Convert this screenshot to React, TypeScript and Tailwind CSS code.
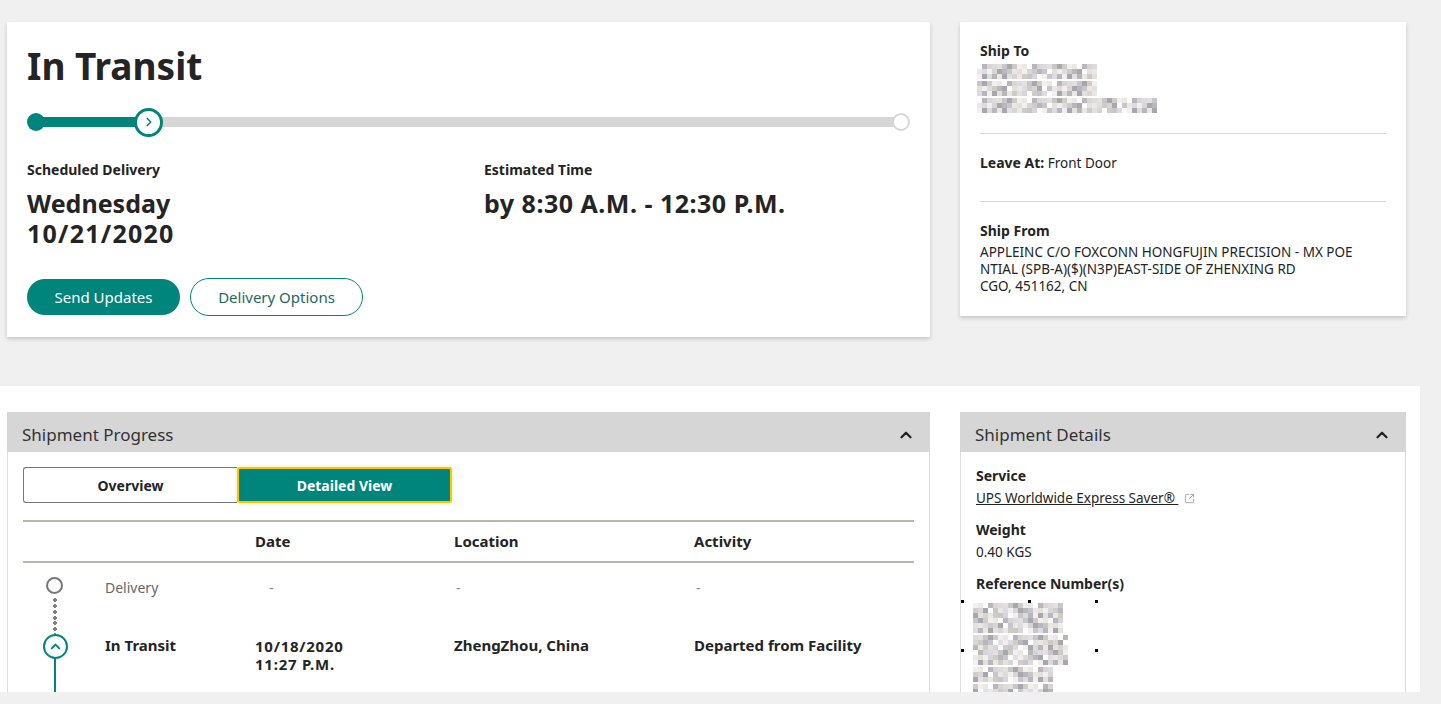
import { ChevronRight, ChevronUp, SquareArrowOutUpRight } from "lucide-react";

const shades = [
  "bg-[#d9d5d6]",
  "bg-[#c8c6cb]",
  "bg-[#f2efee]",
  "bg-[#b9b6bd]",
  "bg-[#e4e0dd]",
  "bg-[#cfcbc6]",
  "bg-white",
  "bg-[#dedbe0]",
  "bg-[#a9a7ae]",
  "bg-[#ebe7e2]",
];

// pixelated (blurred out) text
function Mosaic({ cols, rows, seed }: { cols: number; rows: number; seed: number }) {
  return (
    <div className="flex flex-col">
      {Array.from({ length: rows }).map((_, r) => (
        <div key={r} className="flex">
          {Array.from({ length: cols }).map((_, c) => {
            const i = (c * 7 + r * 13 + seed * 5 + ((c * r + seed) % 3)) % shades.length;
            return <div key={c} className={`h-[5px] w-[5px] ${shades[i]}`} />;
          })}
        </div>
      ))}
    </div>
  );
}

function PanelHeader({ title }: { title: string }) {
  return (
    <div className="flex h-[40px] shrink-0 items-center justify-between bg-[#d6d6d6] pl-[15px] pr-[15px]">
      <span className="translate-y-[3px] text-[17px] text-[#333]">{title}</span>
      <ChevronUp size={18} strokeWidth={3} className="translate-y-[3px] text-[#222]" />
    </div>
  );
}

export default function App() {
  return (
    <div className="min-h-screen bg-[#f0f0f0] font-['Noto_Sans',sans-serif] text-[#242424]">
      {/* Top cards */}
      <div className="flex gap-[30px] px-[7px] pt-[22px]">
        <div className="h-[315px] w-[923px] bg-white px-[20px] pt-[22px] shadow-[0_2px_4px_rgba(0,0,0,0.18)]">
          <h1 className="text-[37px] font-bold leading-[44px]">In Transit</h1>

          {/* progress */}
          <div className="mt-[19px] flex h-[30px] items-center">
            <div className="z-10 h-[18px] w-[18px] shrink-0 rounded-full bg-[#00857d]" />
            <div className="-ml-[2px] h-[10px] w-[93px] bg-[#00857d]" />
            <div className="z-10 -mx-[2px] flex h-[29px] w-[29px] shrink-0 items-center justify-center rounded-full border-[3px] border-[#00857d] bg-white">
              <ChevronRight size={14} strokeWidth={2.5} className="text-[#00857d]" />
            </div>
            <div className="h-[10px] flex-1 bg-[#d6d6d6]" />
            <div className="z-10 -ml-[2px] h-[18px] w-[18px] shrink-0 rounded-full border-2 border-[#d6d6d6] bg-white" />
          </div>

          <div className="mt-[25px] flex">
            <div className="w-[457px]">
              <div className="text-[14px] font-bold leading-[16px]">Scheduled Delivery</div>
              <div className="mt-[10px] text-[25px] font-bold leading-[30px]">
                Wednesday
                <br />
                <span className="tracking-[0.05em]">10/21/2020</span>
              </div>
            </div>
            <div>
              <div className="text-[14px] font-bold leading-[16px]">Estimated Time</div>
              <div className="mt-[10px] text-[25px] font-bold leading-[30px] tracking-[0.02em]">
                by 8:30 A.M. - 12:30 P.M.
              </div>
            </div>
          </div>

          <div className="mt-[31px] flex gap-[10px]">
            <button className="h-[36px] w-[153px] rounded-full bg-[#00857d] text-[15px] text-white">Send Updates</button>
            <button className="h-[38px] w-[173px] -translate-y-[1px] rounded-full border border-[#00857d] bg-white text-[15px] text-[#1c6a65]">
              Delivery Options
            </button>
          </div>
        </div>

        <div className="h-[294px] w-[446px] bg-white px-[20px] pt-[21px] text-[13.5px] shadow-[0_2px_4px_rgba(0,0,0,0.18)]">
          <div className="text-[14px] font-bold leading-[16px]">Ship To</div>
          <div className="mt-[5px] flex flex-col gap-[2px] -ml-[3px]">
            <Mosaic cols={24} rows={3} seed={1} />
            <Mosaic cols={24} rows={3} seed={4} />
            <Mosaic cols={36} rows={3} seed={7} />
          </div>
          <div className="mt-[20px] h-px bg-[#d6d6d6]" />
          <div className="mt-[21px] leading-[16px]">
            <span className="text-[14px] font-bold">Leave At:</span> Front Door
          </div>
          <div className="mt-[30px] h-px bg-[#d6d6d6]" />
          <div className="mt-[21px] text-[14px] font-bold leading-[16px]">Ship From</div>
          <div className="mt-[5px] leading-[17px]">
            APPLEINC C/O FOXCONN HONGFUJIN PRECISION - MX POE
            <br />
            NTIAL (SPB-A)($)(N3P)EAST-SIDE OF ZHENXING RD
            <br />
            CGO, 451162, CN
          </div>
        </div>
      </div>

      {/* Bottom section */}
      <div className="mt-[49px] flex h-[306px] w-[1420px] gap-[30px] overflow-hidden bg-white px-[7px] pt-[26px]">
        {/* Shipment Progress */}
        <div className="flex w-[923px] flex-col">
          <PanelHeader title="Shipment Progress" />
          <div className="flex-1 border-x border-[#dcdcdc] pl-[15px] pr-[15px] pt-[15px]">
            <div className="flex h-[36px]">
              <button className="w-[214px] rounded-l-[3px] border border-r-0 border-[#777] bg-white text-[14px] font-bold">
                Overview
              </button>
              <button className="w-[215px] rounded-[3px] border-2 border-[#ffc400] bg-[#00857d] text-[14px] font-bold text-white shadow-[0_0_3px_rgba(255,196,0,0.5)]">
                Detailed View
              </button>
            </div>

            <div className="mt-[17px] grid h-[43px] grid-cols-[82px_150px_199px_240px_1fr] items-center border-y-2 border-[#bdb3aa] text-[15px] font-bold">
              <div />
              <div />
              <div>Date</div>
              <div>Location</div>
              <div>Activity</div>
            </div>

            {/* Delivery row */}
            <div className="mt-[2px] grid h-[55px] grid-cols-[82px_150px_199px_240px_1fr] text-[14px]">
              <div className="flex flex-col items-center pr-[1px] pt-[12px] -ml-[18px]">
                <div className="h-[17px] w-[17px] rounded-full border-2 border-[#777] bg-white" />
                <div className="mt-[3px] w-[4px] flex-1 bg-[radial-gradient(circle,#808080_1.8px,transparent_2.1px)] bg-[length:4px_6px]" />
              </div>
              <div className="pt-[15px] leading-[16px] text-[#666]">Delivery</div>
              <div className="pl-[14px] pt-[15px] leading-[16px] text-[#888]">-</div>
              <div className="pl-[2px] pt-[15px] leading-[16px] text-[#888]">-</div>
              <div className="pl-[2px] pt-[15px] leading-[16px] text-[#888]">-</div>
            </div>

            {/* In Transit row */}
            <div className="grid h-[80px] grid-cols-[82px_150px_199px_240px_1fr] text-[15px] font-bold">
              <div className="flex flex-col items-center -ml-[18px]">
                <div className="h-[14px] w-[4px] bg-[radial-gradient(circle,#808080_1.8px,transparent_2.1px)] bg-[length:4px_6px]" />
                <div className="flex h-[25px] w-[25px] items-center justify-center rounded-full border-2 border-[#00857d] bg-white">
                  <ChevronUp size={15} strokeWidth={3.2} className="text-[#00857d]" />
                </div>
                <div className="w-[2px] flex-1 bg-[#00857d]" />
              </div>
              <div className="pt-[17px] leading-[16px]">In Transit</div>
              <div className="pt-[17px] leading-[18px] tracking-[0.05em]">
                10/18/2020
                <br />
                11:27 P.M.
              </div>
              <div className="pt-[17px] leading-[16px]">ZhengZhou, China</div>
              <div className="pt-[17px] leading-[16px]">Departed from Facility</div>
            </div>
          </div>
        </div>

        {/* Shipment Details */}
        <div className="flex w-[446px] flex-col">
          <PanelHeader title="Shipment Details" />
          <div className="flex-1 border-x border-[#dcdcdc] pl-[15px] pt-[16px]">
            <div className="text-[14px] font-bold leading-[16px]">Service</div>
            <div className="mt-[6px] flex items-center gap-[6px] text-[13.5px] leading-[16px]">
              <span className="underline">UPS Worldwide Express Saver®&nbsp;</span>
              <SquareArrowOutUpRight size={11} strokeWidth={1.5} className="text-[#888]" />
            </div>
            <div className="mt-[16px] text-[14px] font-bold leading-[16px]">Weight</div>
            <div className="mt-[6px] text-[13.5px] leading-[16px]">0.40 KGS</div>
            <div className="mt-[16px] text-[14px] font-bold leading-[16px]">Reference Number(s)</div>
            <div className="relative mt-[11px] -ml-[3px]">
              <div className="absolute -left-[12px] -top-[3px] h-[3px] w-[3px] bg-black" />
              <div className="absolute left-[55px] -top-[3px] h-[3px] w-[3px] bg-black" />
              <div className="absolute left-[122px] -top-[3px] h-[3px] w-[3px] bg-black" />
              <div className="absolute -left-[12px] top-[46px] h-[3px] w-[3px] bg-black" />
              <div className="absolute left-[122px] top-[46px] h-[3px] w-[3px] bg-black" />
              <div className="flex flex-col gap-[2px]">
                <Mosaic cols={18} rows={6} seed={2} />
                <Mosaic cols={19} rows={6} seed={5} />
                <Mosaic cols={16} rows={3} seed={8} />
                <Mosaic cols={16} rows={3} seed={3} />
              </div>
            </div>
          </div>
        </div>
      </div>
    </div>
  );
}
